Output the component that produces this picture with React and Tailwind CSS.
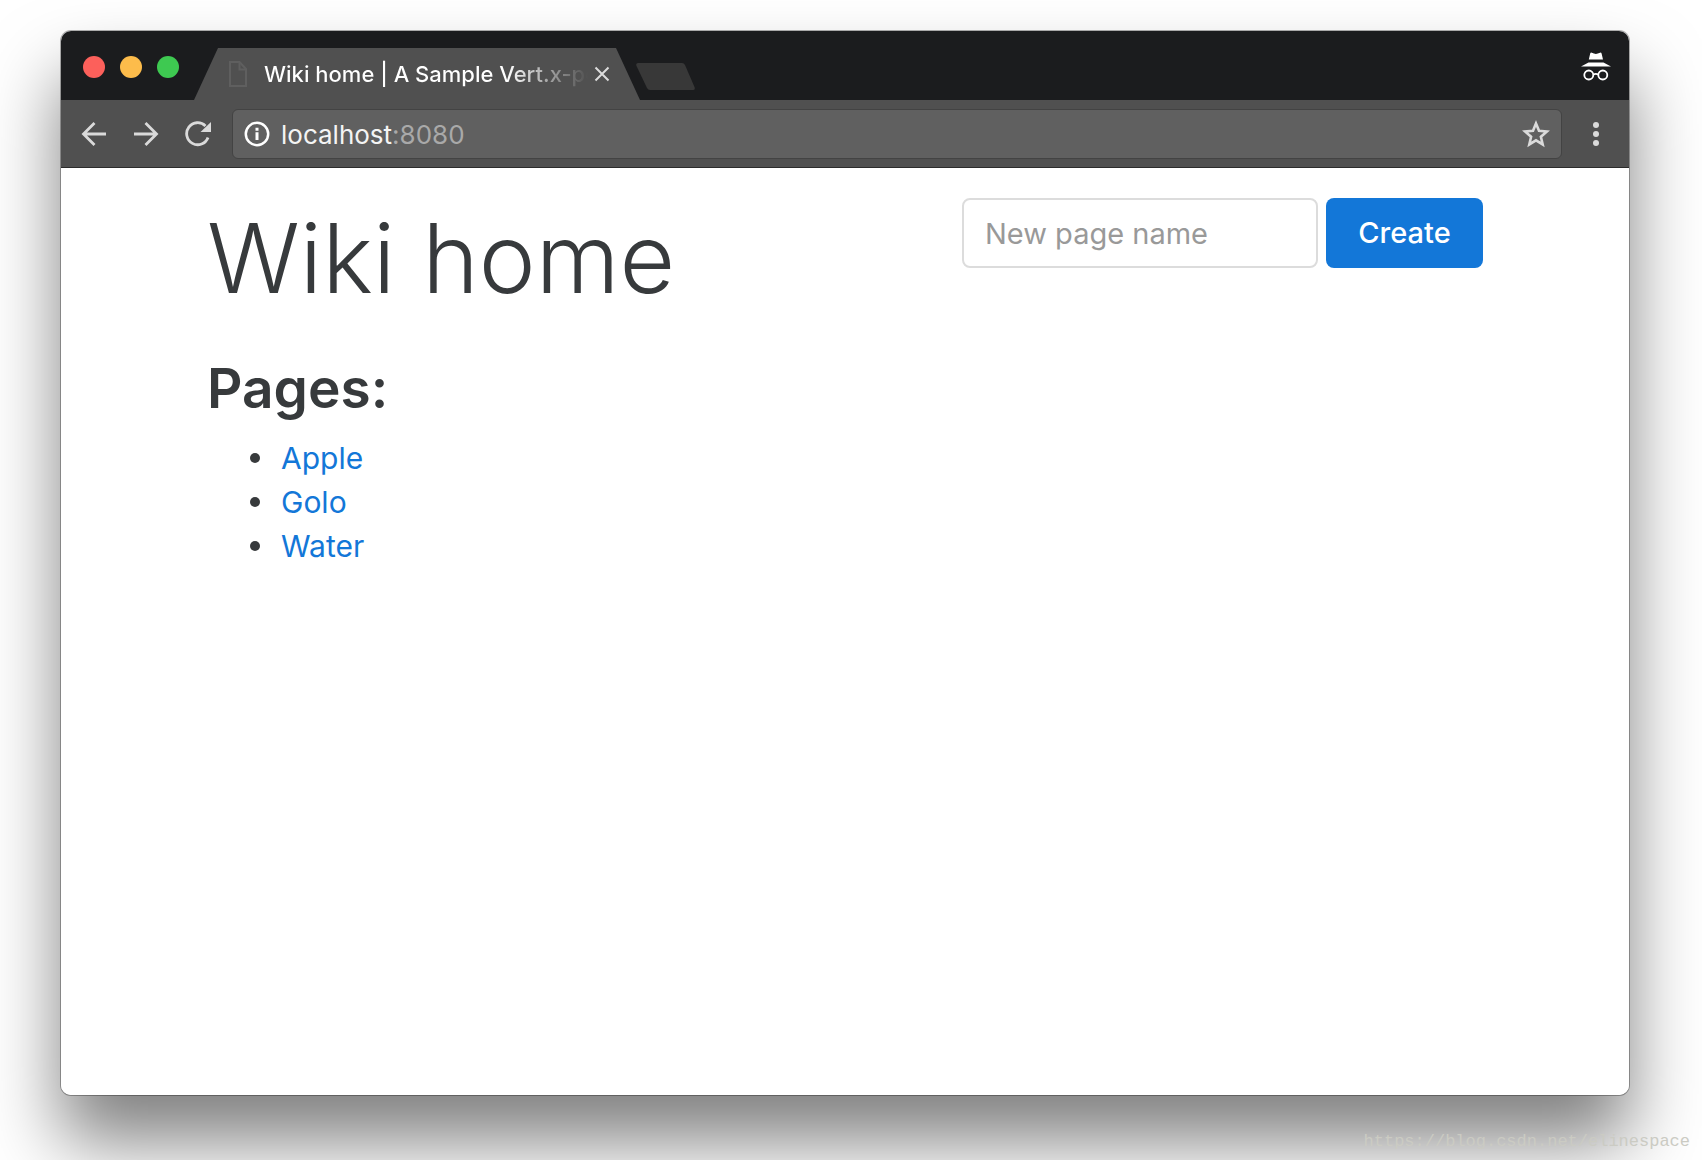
const PAGES = ["Apple", "Golo", "Water"];

function TitleBar() {
  return (
    <header className="flex h-[69px] items-end bg-[#1b1c1e] pl-[22px]">
      <div className="flex gap-[15px] self-center pt-0.5">
        <button aria-label="Close window" className="size-[22px] rounded-full bg-[#fc605b]" />
        <button aria-label="Minimize window" className="size-[22px] rounded-full bg-[#fdbc4b]" />
        <button aria-label="Zoom window" className="size-[22px] rounded-full bg-[#3ec951]" />
      </div>
      <div className="ml-[15px] flex h-[52px] w-[446px] items-center bg-[#505050] pr-[30px] pl-[34px] [clip-path:polygon(24px_0,calc(100%-24px)_0,100%_100%,0_100%)]">
        <svg className="h-[28px] w-[20px] shrink-0" viewBox="0 0 20 28" fill="none" stroke="#5f5f5f" strokeWidth="2">
          <path d="M2 2h9.500l6.500 7v17H2z" />
          <path d="M11.500 2v7.500H18" />
        </svg>
        <span className="ml-4 w-[324px] overflow-hidden bg-linear-to-r from-white from-75% to-transparent bg-clip-text text-[22px] leading-7 font-medium whitespace-nowrap text-transparent">
          Wiki home | A Sample Vert.x-powered wiki
        </span>
        <button aria-label="Close tab" className="ml-auto shrink-0">
          <svg className="size-4" viewBox="0 0 16 16" stroke="#dcdcdc" strokeWidth="2">
            <path d="M1.500 1.500l13 13M14.500 1.500l-13 13" />
          </svg>
        </button>
      </div>
      <button aria-label="New tab" className="mb-[10px] -ml-1">
        <svg className="h-[27px] w-[59px]" viewBox="0 0 59 27" fill="#383838">
          <path d="M2 0h44q2 0 3 2l9.500 22q1 3-1.500 3H14q-2 0-3-2L.5 3Q-.5 0 2 0z" />
        </svg>
      </button>
      <svg className="mt-0.5 mr-[18px] ml-auto h-[30px] w-[30px] self-center" viewBox="0 0 30 30" fill="#fff" aria-label="Incognito">
        <path d="M7.800 7.500L9.200 1.500q.4-1.200 1.600-.8l2.200.9q1.900.6 3.800 0l2.200-.9q1.200-.4 1.600.8l1.400 6z" />
        <path d="M0 14.500l7.500-4h15l7.500 4z" />
        <g fill="none" stroke="#fff" strokeWidth="1.800">
          <circle cx="7.800" cy="23" r="4.500" />
          <circle cx="21.800" cy="23" r="4.500" />
          <path d="M12.300 22.500q2.500-1.200 5 0" />
        </g>
      </svg>
    </header>
  );
}

function Toolbar() {
  return (
    <div className="flex h-[68px] items-center border-b border-[#2b2b2b] bg-[#505050] pr-[30px] pl-[20px]">
      <button aria-label="Back">
        <svg className="size-[26px]" viewBox="0 0 26 26" fill="none" stroke="#dadada" strokeWidth="2.800">
          <path d="M25 13H3M13.500 2L2.500 13l11 11" />
        </svg>
      </button>
      <button aria-label="Forward" className="ml-[26px]">
        <svg className="size-[26px]" viewBox="0 0 26 26" fill="none" stroke="#dadada" strokeWidth="2.800">
          <path d="M1 13h22M12.500 2l11 11-11 11" />
        </svg>
      </button>
      <button aria-label="Reload" className="ml-[26px]">
        <svg className="size-[26px]" viewBox="0 0 26 26">
          <path d="M23 16.500A11 11 0 1 1 20.500 5" fill="none" stroke="#dadada" strokeWidth="2.800" />
          <path d="M26 1v10H15.500z" fill="#dadada" />
        </svg>
      </button>
      <div className="ml-[21px] flex h-[50px] flex-1 items-center rounded-md border border-[#434343] bg-[#606060] px-[11px]">
        <svg className="size-[26px]" viewBox="0 0 26 26" fill="#fff" aria-label="Site information">
          <circle cx="13" cy="13" r="11.200" fill="none" stroke="#fff" strokeWidth="2.500" />
          <path d="M11.500 6.800h3v2.900h-3zM11.500 11.300h3V19h-3z" />
        </svg>
        <span className="ml-[11px] flex-1 pt-0.5 text-[26px] leading-8 text-[#a9a9a9]">
          <span className="text-[#f4f4f4]">localhost</span>:8080
        </span>
        <button aria-label="Bookmark this page">
          <svg className="size-7" viewBox="0 0 28 28" fill="none" stroke="#dadada" strokeWidth="2.600">
            <path d="M14 3.500l3 7.300 7.900.7-6 5.200 1.800 7.700L14 20.300l-6.700 4.100 1.800-7.700-6-5.200 7.900-.7z" />
          </svg>
        </button>
      </div>
      <button aria-label="Menu" className="ml-[31px]">
        <svg className="h-[26px] w-[6px]" viewBox="0 0 6 26" fill="#dadada">
          <circle cx="3" cy="4" r="3" />
          <circle cx="3" cy="13" r="3" />
          <circle cx="3" cy="22" r="3" />
        </svg>
      </button>
    </div>
  );
}

export default function App() {
  return (
    <div className="relative flex min-h-screen flex-col overflow-hidden bg-white pt-[31px] pr-[73px] pb-[65px] pl-[61px] font-['Inter',sans-serif]">
      <div className="flex flex-1 flex-col rounded-[10px] shadow-[0_0_0_1px_rgba(0,0,0,0.3),0_46px_72px_rgba(0,0,0,0.5)]">
        <div className="flex flex-1 flex-col overflow-hidden rounded-[10px] bg-white">
          <TitleBar />
          <Toolbar />
          <main className="mx-auto w-full max-w-[1276px] pt-[30px] text-[30px] leading-[44px] text-[#373a3c]">
            <div className="flex items-start justify-between">
              <h1 className="pt-1 text-[96px] leading-[112px] font-light">Wiki home</h1>
              <form className="flex gap-2 text-[29px]" onSubmit={(e) => e.preventDefault()}>
                <input
                  type="text"
                  aria-label="New page name"
                  placeholder="New page name"
                  className="h-[70px] w-[356px] rounded-lg border-2 border-[#dcdcdc] px-[21px] placeholder:text-[#999999]"
                />
                <button className="h-[70px] w-[157px] rounded-lg bg-[#1377d8] font-medium text-white">Create</button>
              </form>
            </div>
            <h2 className="mt-[42px] text-[55px] leading-[64px] font-semibold">Pages:</h2>
            <ul className="mt-4 pl-[43px]">
              {PAGES.map((page) => (
                <li key={page} className="flex items-center gap-[21px] before:size-[10px] before:rounded-full before:bg-[#373a3c]">
                  <a href={"#" + page} className="text-[#1377d8]">{page}</a>
                </li>
              ))}
            </ul>
          </main>
        </div>
      </div>
      <p className="absolute right-3 bottom-2 font-['Liberation_Mono',monospace] text-[17px] leading-5 text-[#cbcbc3]">
        https://blog.csdn.net/elinespace
      </p>
    </div>
  );
}
